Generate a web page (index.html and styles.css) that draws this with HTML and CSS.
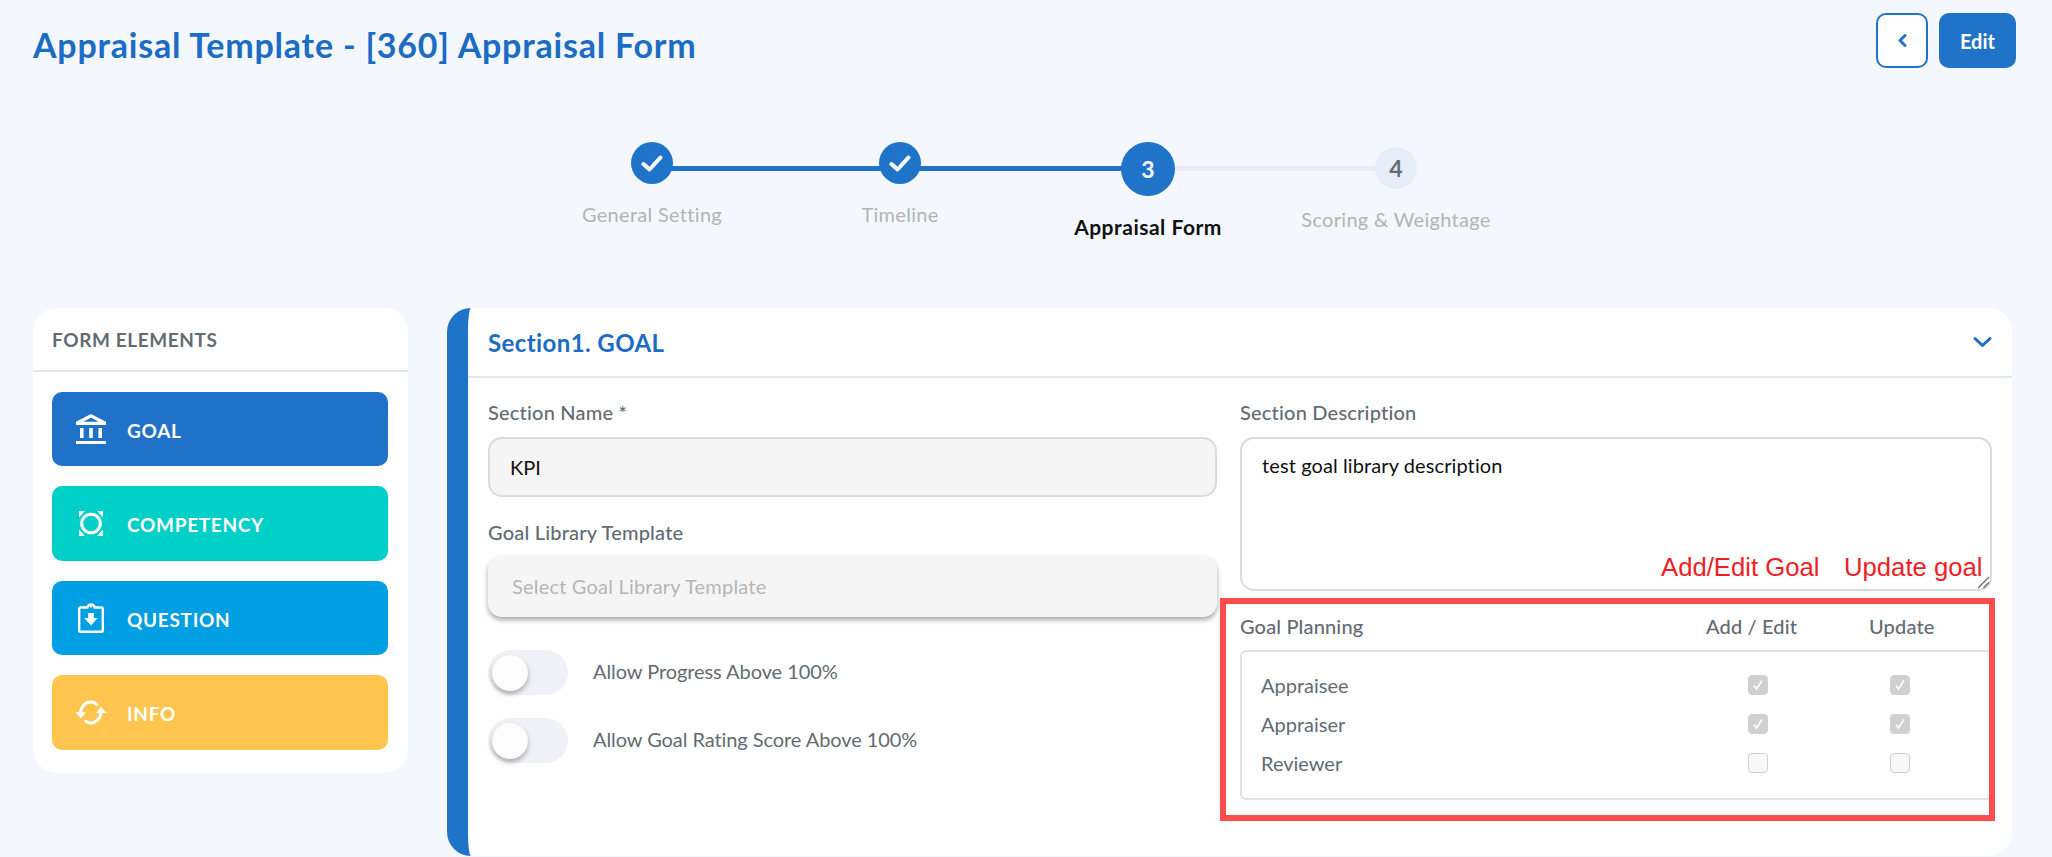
FILE: index.html
```html
<!DOCTYPE html>
<html lang="en">
<head>
<meta charset="utf-8">
<title>Appraisal Template</title>
<link rel="stylesheet" href="styles.css">
</head>
<body>
<header class="top">
  <h1 class="title">Appraisal Template - [360] Appraisal Form</h1>
  <div class="actions">
    <button class="btn-back" type="button" aria-label="Back">
      <svg width="9" height="13" viewBox="0 0 9 13"><path d="M7 1.500 2 6.500l5 5" fill="none" stroke="#1f73c9" stroke-width="3" stroke-linecap="round" stroke-linejoin="round"/></svg>
    </button>
    <button class="btn-edit" type="button">Edit</button>
  </div>
</header>

<ol class="steps">
  <li class="step step-done">
    <span class="dot"><svg width="22" height="17" viewBox="0 0 22 17"><path d="M2.500 9 8.500 14.500 19.500 2.500" fill="none" stroke="#fff" stroke-width="4" stroke-linecap="round" stroke-linejoin="round"/></svg></span>
    <span class="step-label">General Setting</span>
  </li>
  <li class="step step-done">
    <span class="dot"><svg width="22" height="17" viewBox="0 0 22 17"><path d="M2.500 9 8.500 14.500 19.500 2.500" fill="none" stroke="#fff" stroke-width="4" stroke-linecap="round" stroke-linejoin="round"/></svg></span>
    <span class="step-label">Timeline</span>
  </li>
  <li class="step step-current">
    <span class="dot">3</span>
    <span class="step-label">Appraisal Form</span>
  </li>
  <li class="step step-todo">
    <span class="dot">4</span>
    <span class="step-label">Scoring &amp; Weightage</span>
  </li>
</ol>

<main class="content">
  <aside class="elements">
    <div class="elements-head">FORM ELEMENTS</div>
    <div class="elements-list">
      <div class="el el-goal">
        <span class="el-icon"><svg width="30" height="30" viewBox="0 0 30 30" fill="#fff"><path fill-rule="evenodd" d="M15 0 30 7.700V11H0V7.700ZM15 3.600 7.500 7.700h15Z"/><path d="M4 14h3.600v10H4zM13.200 14h3.600v10h-3.600zM22.400 14H26v10h-3.600zM0 27h30v3H0z"/></svg></span>
        <span class="el-text">GOAL</span>
      </div>
      <div class="el el-comp">
        <span class="el-icon"><svg width="24" height="25" viewBox="0 0 24 25" fill="#fff"><circle cx="12" cy="12.500" r="9.300" fill="none" stroke="#fff" stroke-width="3"/><path d="M0 0h6L0 6.500ZM24 0h-6l6 6.500ZM0 25h6l-6-6.500ZM24 25h-6l6-6.500Z"/></svg></span>
        <span class="el-text">COMPETENCY</span>
      </div>
      <div class="el el-ques">
        <span class="el-icon"><svg width="26" height="30" viewBox="0 0 26 30"><path d="M2.500 4.500h6.800a3.800 3.800 0 0 1 7.400 0h6.800a1.300 1.300 0 0 1 1.300 1.300v21.700a1.300 1.300 0 0 1-1.300 1.300H2.500a1.300 1.300 0 0 1-1.300-1.300V5.800a1.300 1.300 0 0 1 1.300-1.300Z" fill="none" stroke="#fff" stroke-width="2.400"/><circle cx="13" cy="3.600" r="1.100" fill="#fff"/><path d="M10.200 10h5.600v5h3.900L13 22.500 6.300 15h3.900Z" fill="#fff"/></svg></span>
        <span class="el-text">QUESTION</span>
      </div>
      <div class="el el-info">
        <span class="el-icon"><svg width="32" height="25" viewBox="0 0 32 25"><path d="M5.500 13C6 6 11 2 15.500 2c3 0 5.500 1.200 7 3.500M26 12.500C25.500 19 20.500 23 16 23c-2.500 0-4.500-.8-6-2.500" fill="none" stroke="#fff" stroke-width="3"/><path d="M.5 12.300h10.500L5.700 18.500ZM21 13h10.500L26 6.800Z" fill="#fff"/></svg></span>
        <span class="el-text">INFO</span>
      </div>
    </div>
  </aside>

  <section class="panel">
    <div class="panel-head">
      <h2 class="panel-title">Section1. GOAL</h2>
      <svg class="chev" width="19" height="12" viewBox="0 0 19 12"><path d="M2 2.500 9.500 9.500 17 2.500" fill="none" stroke="#1a6cc4" stroke-width="3" stroke-linecap="round" stroke-linejoin="round"/></svg>
    </div>
    <div class="panel-body">
      <div class="col-left">
        <div class="field-label">Section Name *</div>
        <div class="input">KPI</div>
        <div class="field-label label-lib">Goal Library Template</div>
        <div class="select">Select Goal Library Template</div>
        <div class="switch-row switch-first"><span class="switch"><span class="knob"></span></span><span class="switch-text">Allow Progress Above 100%</span></div>
        <div class="switch-row"><span class="switch"><span class="knob"></span></span><span class="switch-text">Allow Goal Rating Score Above 100%</span></div>
      </div>
      <div class="col-right">
        <div class="field-label">Section Description</div>
        <div class="textarea">
          test goal library description
          <span class="note note-add">Add/Edit Goal</span>
          <span class="note note-upd">Update goal</span>
          <svg class="grip" width="14" height="14" viewBox="0 0 14 14"><path d="M2 13 13 2M7.500 13 13 7.500" stroke="#666" stroke-width="1.200" fill="none"/></svg>
        </div>
        <div class="plan">
          <div class="plan-head">
            <span class="plan-name">Goal Planning</span>
            <span class="plan-c1">Add / Edit</span>
            <span class="plan-c2">Update</span>
          </div>
          <div class="plan-box">
            <div class="plan-row"><span class="role">Appraisee</span><span class="cb cb-on cb-1"><svg width="14" height="14" viewBox="0 0 14 14"><path d="M3 7.500 5.500 11 11 2.500" fill="none" stroke="#fff" stroke-width="1.600"/></svg></span><span class="cb cb-on"><svg width="14" height="14" viewBox="0 0 14 14"><path d="M3 7.500 5.500 11 11 2.500" fill="none" stroke="#fff" stroke-width="1.600"/></svg></span></div>
            <div class="plan-row"><span class="role">Appraiser</span><span class="cb cb-on cb-1"><svg width="14" height="14" viewBox="0 0 14 14"><path d="M3 7.500 5.500 11 11 2.500" fill="none" stroke="#fff" stroke-width="1.600"/></svg></span><span class="cb cb-on"><svg width="14" height="14" viewBox="0 0 14 14"><path d="M3 7.500 5.500 11 11 2.500" fill="none" stroke="#fff" stroke-width="1.600"/></svg></span></div>
            <div class="plan-row"><span class="role">Reviewer</span><span class="cb cb-1"></span><span class="cb"></span></div>
          </div>
          <div class="redbox"></div>
        </div>
      </div>
    </div>
  </section>
</main>
</body>
</html>
```
FILE: styles.css
```css
* { box-sizing: border-box; }
html, body { height: 857px; overflow: hidden; }
body { margin: 0; background: #f4f7fe; font-family: Lato, "Liberation Sans", sans-serif; color: #636b73; }

.top { display: flex; justify-content: space-between; align-items: flex-start; padding: 13px 36px 0 33px; height: 142px; }
.title { margin: 0; padding-top: 12px; font-size: 34px; line-height: 40px; font-weight: 700; letter-spacing: .78px; color: #1a6cc4; }
.actions { display: flex; gap: 11px; }
.btn-back { width: 52px; height: 55px; border: 2px solid #1f73c9; border-radius: 10px; background: #fff; display: flex; align-items: center; justify-content: center; padding: 0; }
.btn-edit { width: 77px; height: 55px; border: 0; border-radius: 10px; background: #1f73c9; color: #fff; font: 700 20px Lato, sans-serif; padding: 0; }

.steps { list-style: none; margin: 0 0 0 528px; padding: 0; display: flex; width: 992px; height: 166px; }
.step { position: relative; width: 248px; display: flex; flex-direction: column; align-items: center; }
.step::after { content: ""; position: absolute; left: 50%; top: 24px; width: 248px; height: 5px; background: #1f73c9; }
.step-current::after { background: #e9ebf5; }
.step-todo::after { display: none; }
.dot { position: relative; z-index: 1; width: 42px; height: 42px; border-radius: 50%; background: #1f73c9; color: #fff; display: flex; align-items: center; justify-content: center; font-weight: 700; font-size: 23px; }
.step-label { margin-top: 18px; font-size: 20px; line-height: 24px; letter-spacing: .3px; color: #b3b3b3; white-space: nowrap; }
.step-current .dot { width: 54px; height: 54px; }
.step-current .step-label { color: #111; font-weight: 700; font-size: 21px; letter-spacing: .5px; margin-top: 19px; }
.step-todo { padding-top: 5px; }
.step-todo .dot { background: #e6edf9; color: #636b73; }

.content { display: flex; align-items: flex-start; gap: 39px; padding-left: 33px; }

.elements { width: 375px; height: 465px; background: #fff; border-radius: 24px; }
.elements-head { height: 64px; border-bottom: 2px solid #e2e6ec; padding: 20px 0 0 19px; font-size: 19px; line-height: 24px; font-weight: 700; letter-spacing: .6px; }
.elements-list { padding: 19.5px 20px 0 19px; display: flex; flex-direction: column; gap: 20px; }
.el { height: 74.5px; border-radius: 10px; display: flex; align-items: center; color: #fff; font-size: 19px; font-weight: 700; letter-spacing: .7px; }
.el-icon { width: 75px; padding-left: 2px; display: flex; justify-content: center; }
.el-text { padding-top: 3px; }
.el-goal { background: #2072c8; }
.el-comp { background: #00d0c8; }
.el-ques { background: #009ee2; }
.el-info { background: #ffc54f; }

.panel { width: 1565px; height: 548px; background: #fff; border-left: 21px solid #1f73c9; border-radius: 24px; }
.panel-head { height: 70px; border-bottom: 2px solid #e0e6ec; display: flex; justify-content: space-between; align-items: center; padding: 0 20px; }
.panel-title { margin: 0; font-size: 24px; font-weight: 700; letter-spacing: .4px; color: #1a6cc4; }
.panel-body { display: flex; gap: 23px; padding: 0 20px; }
.col-left { width: 729px; }
.col-right { width: 752px; }

.field-label { height: 59px; padding-top: 22px; font-size: 20px; line-height: 24px; font-weight: 500; letter-spacing: .2px; }
.input { height: 60px; border: 2px solid #d5dde3; border-radius: 14px; background: #f5f5f5; padding-left: 20px; font-size: 20px; line-height: 56px; color: #111; }
.label-lib { height: 59px; padding-top: 23px; }
.select { height: 61px; border-radius: 14px; background: #f5f5f5; padding-left: 24px; font-size: 20px; line-height: 61px; letter-spacing: .2px; color: #b5b5b5; box-shadow: 0 3px 5px rgba(0,0,0,.35); }
.switch-row { display: flex; align-items: center; gap: 25px; height: 45px; margin-top: 23px; font-size: 20px; letter-spacing: -.07px; }
.switch-first { margin-top: 33px; }
.switch { position: relative; width: 80px; height: 45px; border-radius: 23px; background: #f0f1f6; }
.knob { position: absolute; left: 4px; top: 5px; width: 36px; height: 36px; border-radius: 50%; background: #fcfcfc; box-shadow: 0 3px 5px rgba(0,0,0,.3); }
.switch-text { position: relative; top: -2px; }

.textarea { position: relative; height: 154px; border: 2px solid #d5dde3; border-radius: 14px; padding: 14px 20px; font-size: 20px; line-height: 24px; letter-spacing: .1px; color: #111; }
.note { position: absolute; top: 113px; font: 25.7px/30px "Liberation Sans", sans-serif; letter-spacing: 0; color: #f21d24; }
.note-add { left: 419px; }
.note-upd { left: 602px; }
.grip { position: absolute; right: 0; bottom: 0; }

.plan { position: relative; margin-top: 7px; height: 223px; }
.plan-head { display: flex; height: 52px; padding-top: 16px; font-size: 20px; line-height: 24px; font-weight: 500; letter-spacing: .15px; }
.plan-name { width: 466px; }
.plan-c1 { width: 163px; }
.plan-box { width: 752px; height: 150px; border: 2px solid #dde3e8; border-radius: 6px; padding: 14px 0 0 19px; }
.plan-row { display: flex; align-items: center; height: 38.8px; font-size: 20px; }
.role { width: 487px; }
.cb { width: 20px; height: 20px; border-radius: 4px; border: 1px solid #cfcfcf; background: #f8f8f8; display: flex; align-items: center; justify-content: center; }
.cb-1 { margin-right: 122px; }
.cb-on { background: #d0d0d0; border-color: #d0d0d0; }
.redbox { position: absolute; left: -20px; top: 0; width: 775px; height: 223px; border: 6px solid #ff4d4d; }
```
